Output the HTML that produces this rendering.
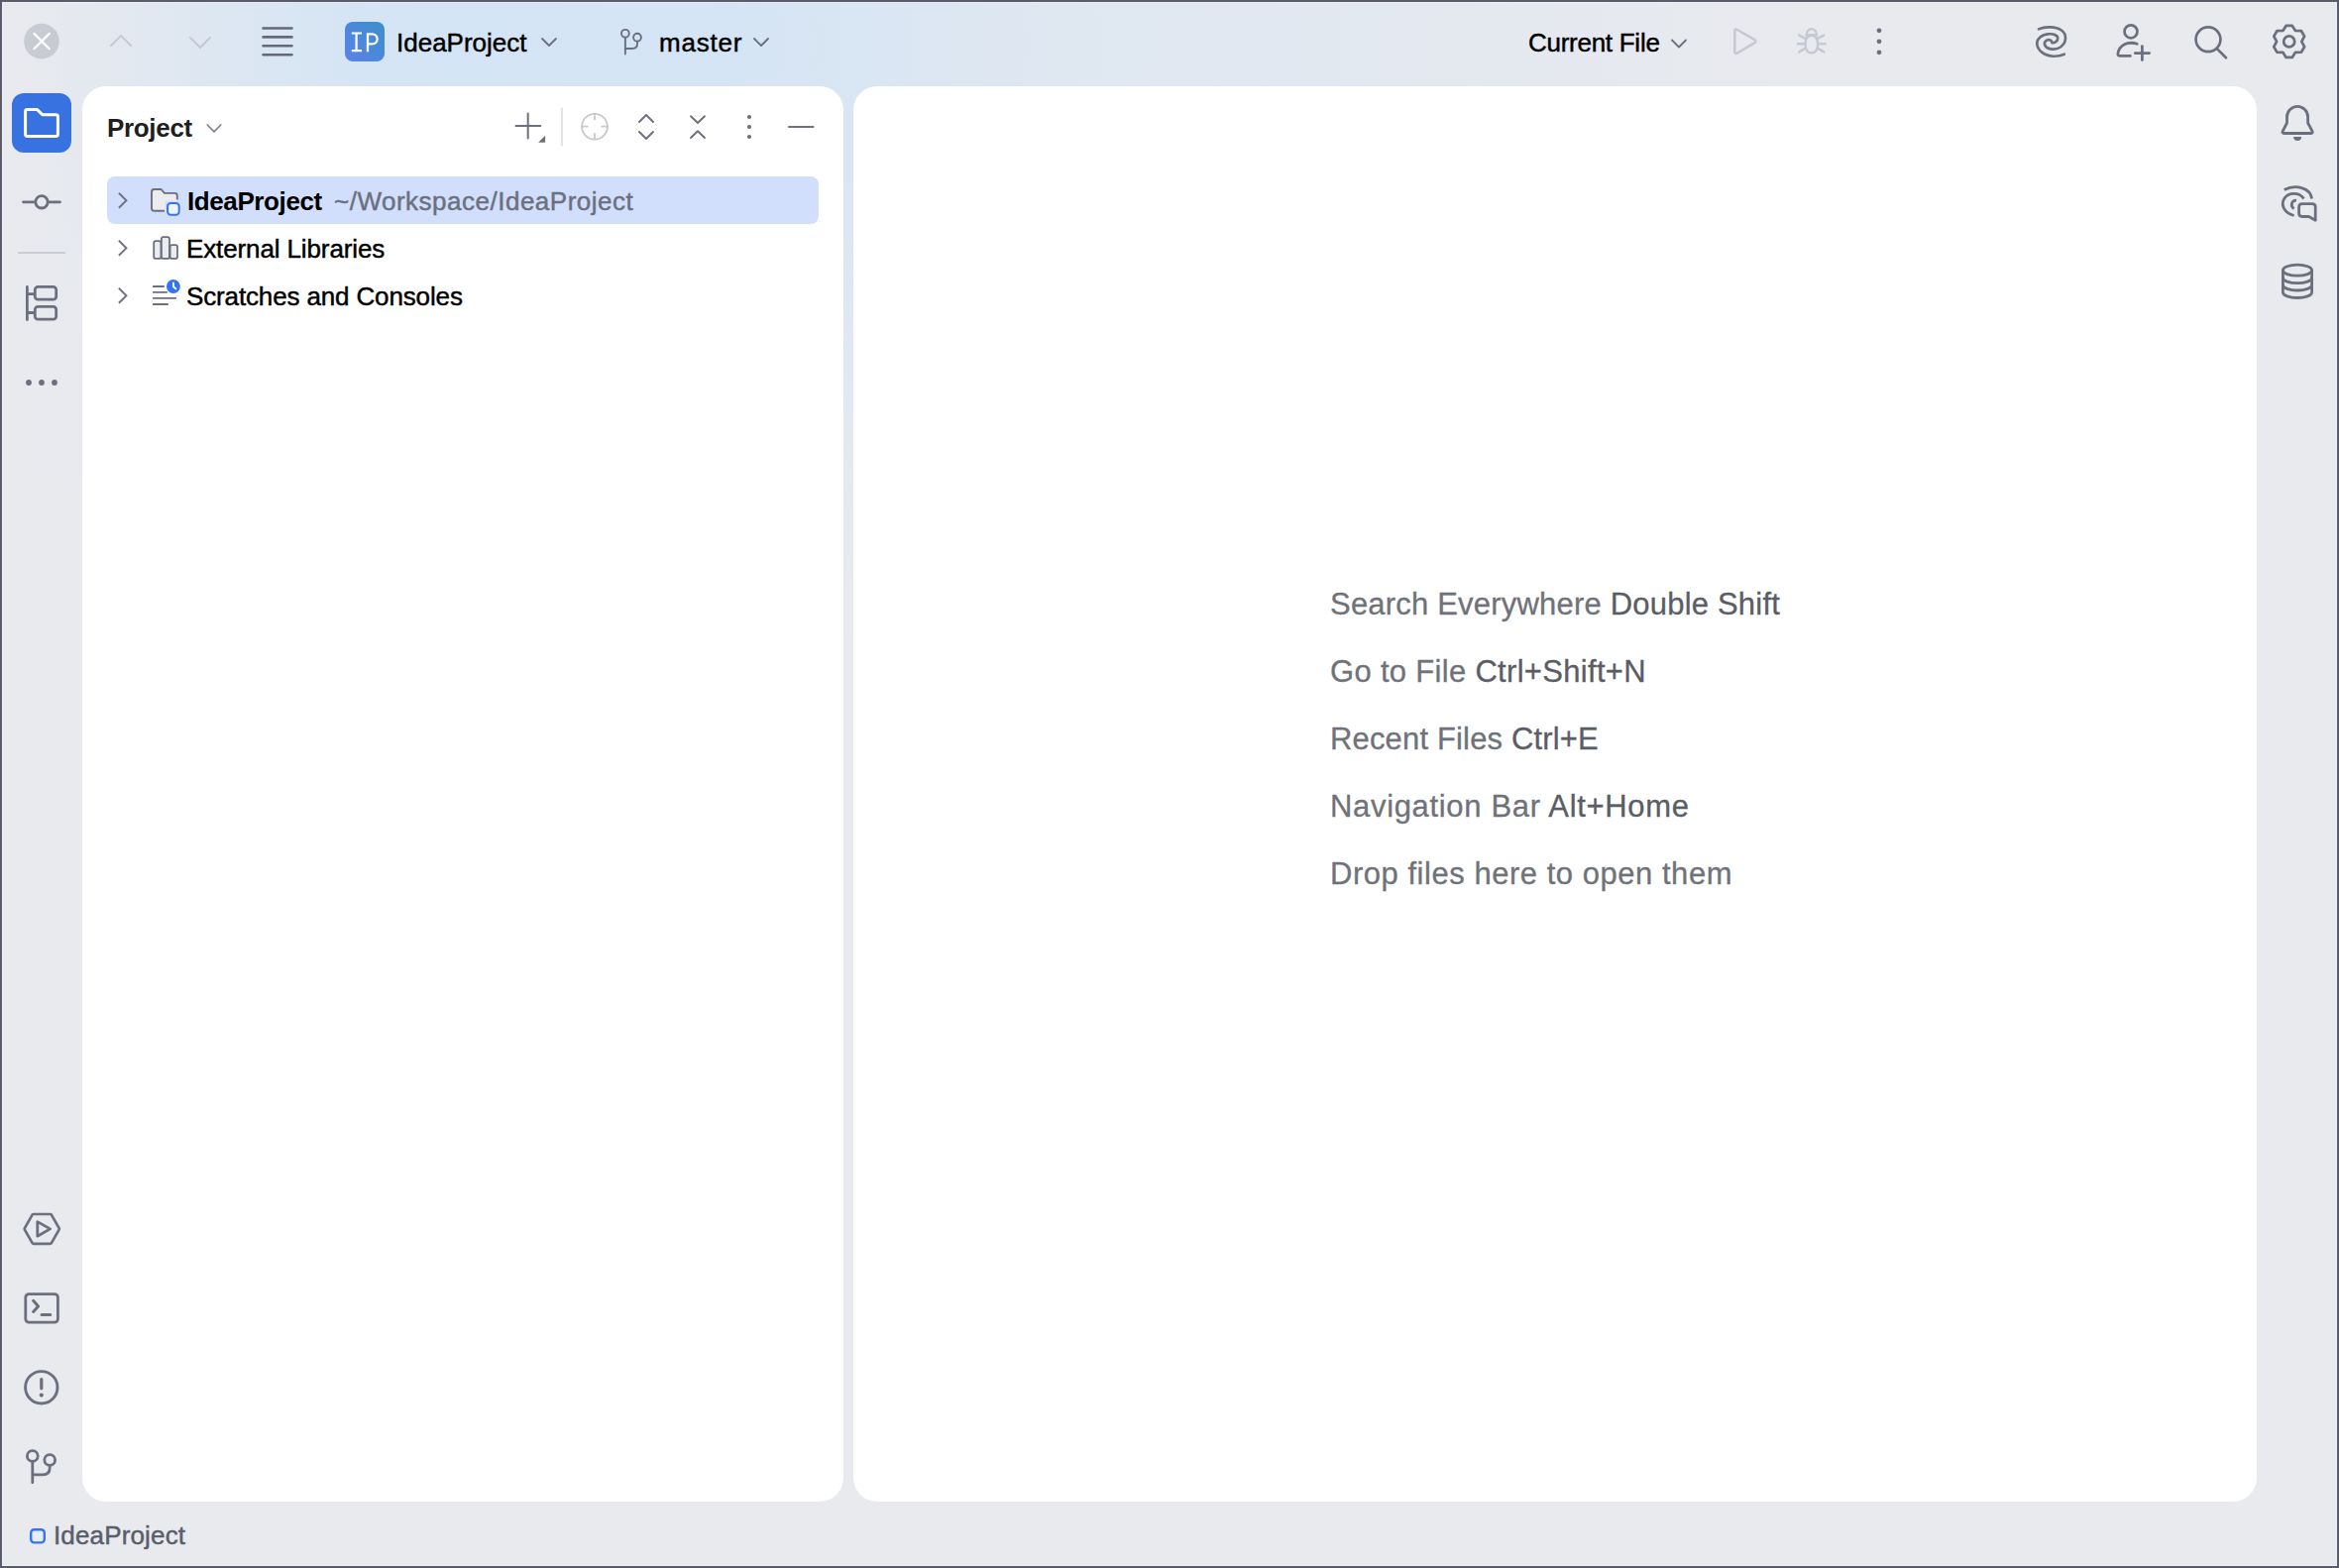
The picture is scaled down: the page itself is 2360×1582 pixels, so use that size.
<!DOCTYPE html>
<html>
<head>
<meta charset="utf-8">
<style>
html,body{margin:0;padding:0;}
body{width:2360px;height:1582px;position:relative;overflow:hidden;background:#5A5C69;font-family:"Liberation Sans",sans-serif;}
#win{position:absolute;left:2px;top:2px;width:2356px;height:1578px;background:#E9EAEE;overflow:hidden;}
#hl{position:absolute;left:2px;top:2px;width:2354px;height:1576px;border:1px solid rgba(246,248,255,0.45);pointer-events:none;}
#glow{position:absolute;left:0;top:0;width:2356px;height:1578px;background:
 radial-gradient(ellipse 560px 440px at 460px 40px, rgba(211,228,245,0.95) 0%, rgba(211,228,245,0.8) 45%, rgba(211,228,245,0) 100%),
 radial-gradient(ellipse 1100px 620px at 760px 40px, rgba(211,228,245,0.6) 0%, rgba(211,228,245,0.35) 50%, rgba(211,228,245,0) 100%);}
#lmask{position:absolute;left:0;top:0;width:420px;height:1578px;background:linear-gradient(to right, rgba(233,234,238,0.92) 0px, rgba(233,234,238,0.6) 110px, rgba(233,234,238,0) 380px);}
.panel{position:absolute;background:#fff;border-radius:24px;}
.t{position:absolute;white-space:pre;line-height:40px;height:40px;}
.r{-webkit-text-stroke:0.45px currentColor;}
svg.ov{position:absolute;left:0;top:0;}
</style>
</head>
<body>
<div id="win">
  <div id="glow"></div>
  <div id="lmask"></div>
</div>
<!-- panels in page coordinates -->
<div class="panel" style="left:83px;top:87px;width:768px;height:1428px;"></div>
<div class="panel" style="left:861px;top:87px;width:1416px;height:1428px;"></div>
<!-- selection -->
<div style="position:absolute;left:108px;top:178px;width:718px;height:48px;background:#D1DFFD;border-radius:8px;"></div>

<!-- Toolbar texts -->
<div class="t r" style="left:400px;top:23px;font-size:26px;color:#000;">IdeaProject</div>
<div class="t r" style="left:665px;top:23px;font-size:26px;color:#000;letter-spacing:0.8px;">master</div>
<div class="t r" style="left:1542px;top:23px;font-size:26px;color:#000;letter-spacing:-0.27px;">Current File</div>

<!-- Project panel header -->
<div class="t" style="left:108px;top:109px;font-size:26px;font-weight:bold;color:#1E1F22;letter-spacing:-0.33px;">Project</div>

<!-- Tree -->
<div class="t" style="left:189px;top:183px;font-size:26px;font-weight:bold;color:#000;letter-spacing:-0.4px;">IdeaProject</div>
<div class="t r" style="left:337px;top:183px;font-size:26px;color:#6C707E;letter-spacing:0.5px;">~/Workspace/IdeaProject</div>
<div class="t r" style="left:188px;top:231px;font-size:26px;color:#000;letter-spacing:-0.12px;">External Libraries</div>
<div class="t r" style="left:188px;top:279px;font-size:26px;color:#000;letter-spacing:-0.14px;">Scratches and Consoles</div>

<!-- Editor empty text -->
<div class="t r" style="left:1342px;top:590px;font-size:31px;color:#6F7279;-webkit-text-stroke-width:0.3px;letter-spacing:0.2px;">Search Everywhere <span style="color:#5A5D66">Double Shift</span></div>
<div class="t r" style="left:1342px;top:658px;font-size:31px;color:#6F7279;-webkit-text-stroke-width:0.3px;letter-spacing:0.31px;">Go to File <span style="color:#5A5D66">Ctrl+Shift+N</span></div>
<div class="t r" style="left:1342px;top:726px;font-size:31px;color:#6F7279;-webkit-text-stroke-width:0.3px;letter-spacing:0.16px;">Recent Files <span style="color:#5A5D66">Ctrl+E</span></div>
<div class="t r" style="left:1342px;top:794px;font-size:31px;color:#6F7279;-webkit-text-stroke-width:0.3px;letter-spacing:0.67px;">Navigation Bar <span style="color:#5A5D66">Alt+Home</span></div>
<div class="t r" style="left:1342px;top:862px;font-size:31px;color:#6F7279;-webkit-text-stroke-width:0.3px;letter-spacing:0.53px;">Drop files here to open them</div>

<!-- Status bar -->
<div class="t r" style="left:54px;top:1529px;font-size:26px;color:#5A5D6B;letter-spacing:0.15px;">IdeaProject</div>

<div id="hl"></div>
<svg class="ov" width="2360" height="1582" viewBox="0 0 2360 1582" fill="none" stroke-linecap="round" stroke-linejoin="round">
 <defs>
  <linearGradient id="ipg" x1="0" y1="1" x2="1" y2="0">
   <stop offset="0" stop-color="#5B82E8"/>
   <stop offset="1" stop-color="#3B8FCB"/>
  </linearGradient>
 </defs>
 <!-- close button -->
 <circle cx="42" cy="41.6" r="17.8" fill="#C9CBD3"/>
 <path d="M34.4,33.9 L49.8,49.3 M49.8,33.9 L34.4,49.3" stroke="#fff" stroke-width="2.2"/>
 <!-- back/forward disabled -->
 <path d="M112,46 L122,36 L132,46" stroke="#C6C9D1" stroke-width="1.8"/>
 <path d="M192,38 L202,48 L212,38" stroke="#C6C9D1" stroke-width="1.8"/>
 <!-- hamburger -->
 <path d="M265.5,28.5 H294.5 M265.5,37.4 H294.5 M265.5,46.3 H294.5 M265.5,55.3 H294.5" stroke="#656977" stroke-width="2.6"/>
 <!-- project icon -->
 <rect x="348" y="22" width="40" height="40" rx="8" fill="url(#ipg)"/>
 <path d="M354.8,33.5 H365 M359.6,33.5 V51.1 M354.8,51.1 H365" stroke="#fff" stroke-width="2.2" stroke-linecap="butt"/>
 <path d="M371,52.2 V34.3 H375.6 A5.05,5.05 0 0 1 375.6,44.4 H371" stroke="#fff" stroke-width="2.3" stroke-linecap="butt" stroke-linejoin="miter"/>
 <!-- chevrons -->
 <path d="M547,39 L554,46 L561,39" stroke="#6C707E" stroke-width="1.8"/>
 <!-- branch icon -->
 <circle cx="630.9" cy="33.8" r="3.9" stroke="#6C707E" stroke-width="1.9"/>
 <circle cx="643" cy="37.7" r="3.9" stroke="#6C707E" stroke-width="1.9"/>
 <path d="M630.9,37.7 V54.6 M643,41.6 V44 Q643,49 638,49 H630.9" stroke="#6C707E" stroke-width="1.9"/>
 <path d="M761,39 L768,46 L775,39" stroke="#6C707E" stroke-width="1.8"/>
 <!-- current file chevron -->
 <path d="M1687,40.5 L1694,47.5 L1701,40.5" stroke="#6C707E" stroke-width="1.8"/>
 <!-- run disabled -->
 <path d="M1750.3,31.5 Q1750.3,28.6 1752.8,30 L1770.5,40.2 Q1772.8,41.7 1770.5,43.2 L1752.8,53.6 Q1750.3,55 1750.3,52.2 Z" stroke="#C6C9D1" stroke-width="2.5"/>
 <!-- debug disabled -->
 <g stroke="#C6C9D1" stroke-width="2.4">
  <path d="M1827.8,35.8 C1832.3,35.8 1834.1,39.2 1834.1,44.6 C1834.1,50 1832.3,53.4 1827.8,53.4 C1823.3,53.4 1821.5,50 1821.5,44.6 C1821.5,39.2 1823.3,35.8 1827.8,35.8 Z"/>
  <path d="M1822.9,35.2 V34.2 A4.9,4.9 0 0 1 1832.7,34.2 V35.2"/>
  <path d="M1822.6,35.2 H1833"/>
  <path d="M1814,44.3 H1820.5 M1835.1,44.3 H1841.6 M1815.3,35.6 L1821.3,38.6 M1840.3,35.6 L1834.3,38.6 M1815.3,52.4 L1820.6,49.3 M1840.3,52.4 L1835,49.3"/>
 </g>
 <!-- kebab -->
 <circle cx="1896" cy="30.8" r="2.4" fill="#6C707E"/>
 <circle cx="1896" cy="41.8" r="2.4" fill="#6C707E"/>
 <circle cx="1896" cy="52.8" r="2.4" fill="#6C707E"/>
 <!-- AI spiral -->
 <path d="M2057,29.4 C2063,26.6 2074,26.3 2080,30.5 C2085.5,34.5 2085.5,43 2079,47.5 C2074,50.8 2066,50.2 2063.5,46 C2061.5,42.5 2065,39.7 2068,40.3 C2069.5,40.6 2070.5,41.8 2070.2,42.9 C2072.5,43.7 2076,42 2076.2,39 C2076.5,35.5 2072,34 2067.5,34.3 C2060,34.8 2055,39 2055.3,44 C2055.6,51 2063,56.5 2072,56.7 C2076,56.8 2080,56 2082.8,54.7" stroke="#6C707E" stroke-width="2.65"/>
 <!-- add user -->
 <circle cx="2150" cy="31.8" r="6.5" stroke="#6C707E" stroke-width="2.75"/>
 <path d="M2156.3,44.3 C2147,41.2 2138,45.5 2136.9,54.4 Q2136.7,56.4 2138.9,56.4 H2149.4" stroke="#6C707E" stroke-width="2.75"/>
 <path d="M2161.4,46.5 V60.5 M2154.2,53.5 H2168.6" stroke="#6C707E" stroke-width="2.75"/>
 <!-- search -->
 <circle cx="2228" cy="39.8" r="12.4" stroke="#6C707E" stroke-width="2.7"/>
 <path d="M2237.4,49.6 L2246,58.2" stroke="#6C707E" stroke-width="2.7"/>
 <!-- settings gear -->
 <path d="M2312.8,25.9 L2306.6,25.9 L2303.4,31.0 L2297.4,31.2 L2294.3,36.6 L2297.1,41.9 L2294.3,47.2 L2297.4,52.6 L2303.4,52.8 L2306.6,57.9 L2312.8,57.9 L2316.0,52.8 L2322.0,52.6 L2325.1,47.2 L2322.3,41.9 L2325.1,36.6 L2322.0,31.2 L2316.0,31.0Z" stroke="#6C707E" stroke-width="2.75"/>
 <circle cx="2309.7" cy="41.9" r="5.5" stroke="#6C707E" stroke-width="2.75"/>

 <!-- left stripe: project button -->
 <rect x="12" y="94" width="60" height="60" rx="12" fill="#3872E0"/>
 <path d="M25.6,112.5 Q25.6,110.6 27.5,110.6 H37.5 L43,115.8 H56.5 Q58.4,115.8 58.4,117.7 V135.5 Q58.4,137.4 56.5,137.4 H27.5 Q25.6,137.4 25.6,135.5 Z" stroke="#fff" stroke-width="3"/>
 <!-- commit -->
 <path d="M23.5,203.8 H34.3 M49.7,203.8 H60.5" stroke="#6C707E" stroke-width="2.8"/>
 <circle cx="42" cy="203.8" r="6.2" stroke="#6C707E" stroke-width="2.8"/>
 <!-- separator -->
 <path d="M18,255 H66" stroke="#C9CCD4" stroke-width="2" stroke-linecap="butt"/>
 <!-- structure -->
 <path d="M27.4,289.5 V322.5 M27.4,296.7 H34.5 M27.4,315.5 H34.5" stroke="#6C707E" stroke-width="2.8"/>
 <rect x="35.3" y="289.3" width="21.4" height="12.9" rx="3" stroke="#6C707E" stroke-width="2.8"/>
 <rect x="35.3" y="309.3" width="21.4" height="12.9" rx="3" stroke="#6C707E" stroke-width="2.8"/>
 <!-- more -->
 <circle cx="29" cy="386" r="2.9" fill="#6C707E"/>
 <circle cx="42" cy="386" r="2.9" fill="#6C707E"/>
 <circle cx="55" cy="386" r="2.9" fill="#6C707E"/>
 <!-- bottom left: services -->
 <path d="M33.8,1225 H50.7 Q51.5,1225 51.9,1225.7 L59.6,1239.2 Q60,1239.9 59.6,1240.6 L51.9,1254.2 Q51.5,1254.9 50.7,1254.9 H33.8 Q33,1254.9 32.6,1254.2 L24.9,1240.6 Q24.5,1239.9 24.9,1239.2 L32.6,1225.7 Q33,1225 33.8,1225 Z" stroke="#6C707E" stroke-width="2.7"/>
 <path d="M37.8,1232.6 V1247.2 L50.6,1239.9 Z" stroke="#6C707E" stroke-width="2.8"/>
 <!-- terminal -->
 <rect x="25.8" y="1305.6" width="32.6" height="28.6" rx="3.4" stroke="#6C707E" stroke-width="2.8"/>
 <path d="M33.6,1312.3 L38.6,1317.9 L33.6,1323.5 M42,1326.4 H50.8" stroke="#6C707E" stroke-width="3"/>
 <!-- problems -->
 <circle cx="41.8" cy="1399.8" r="16.2" stroke="#6C707E" stroke-width="2.9"/>
 <path d="M41.8,1391.6 V1400.8" stroke="#6C707E" stroke-width="3.2"/>
 <circle cx="41.8" cy="1407.6" r="2.1" fill="#6C707E"/>
 <!-- git -->
 <circle cx="32.8" cy="1469" r="5.4" stroke="#6C707E" stroke-width="2.8"/>
 <circle cx="50.2" cy="1473" r="5.4" stroke="#6C707E" stroke-width="2.8"/>
 <path d="M32.8,1474.4 V1495.8 M50.2,1478.4 V1481 Q50.2,1487.8 43.4,1487.8 H32.8" stroke="#6C707E" stroke-width="2.8"/>

 <!-- right stripe: bell -->
 <path d="M2307.5,124 V118 A10.55,10.55 0 0 1 2328.6,118 V124 L2332.9,132.2 Q2334.1,134.5 2331.6,134.5 H2304.6 Q2302.1,134.5 2303.3,132.2 Z" stroke="#6C707E" stroke-width="2.8"/>
 <path d="M2314.1,138.1 A4,4 0 0 0 2322.1,138.1 Z" fill="#6C707E"/>
 <!-- ai chat -->
 <g stroke="#6C707E" stroke-width="2.8">
  <path d="M2304.7,191.4 C2316,186 2331,189 2332.6,200.5" stroke-linecap="butt"/>
  <path d="M2324.5,200.5 C2320,193.5 2309,194 2305,200 C2300.5,207 2305,215 2314.6,217.5" stroke-linecap="butt"/>
  <path d="M2317,202.2 C2312.5,202 2310.2,207.5 2314.6,210.5" stroke-linecap="butt"/>
  <path d="M2322.8,205.6 H2333 Q2336.2,205.6 2336.2,208.8 V222.3 L2329.6,218.5 H2322.8 Q2319.6,218.5 2319.6,215.3 V208.8 Q2319.6,205.6 2322.8,205.6 Z"/>
 </g>
 <!-- database -->
 <g stroke="#6C707E" stroke-width="2.8">
  <ellipse cx="2318" cy="272.7" rx="14.6" ry="5.5"/>
  <path d="M2303.4,272.7 V295 A14.6,5.5 0 0 0 2332.6,295 V272.7"/>
  <path d="M2303.4,280.2 A14.6,5.5 0 0 0 2332.6,280.2 M2303.4,287.5 A14.6,5.5 0 0 0 2332.6,287.5"/>
 </g>

 <!-- project panel header icons -->
 <path d="M220,128" />
 <path d="M209.2,126 L216,132.8 L222.8,126" stroke="#7E818B" stroke-width="1.7"/>
 <path d="M520.5,126.9 H545.3 M532.7,114.5 V139.5" stroke="#6C707E" stroke-width="2"/>
 <path d="M550.1,136.7 V143.7 H543.1 Z" fill="#6C707E"/>
 <path d="M567,108.5 V147.5" stroke="#DCDEE3" stroke-width="1.6" stroke-linecap="butt"/>
 <circle cx="600" cy="127.7" r="12.9" stroke="#C8C9CE" stroke-width="1.8"/>
 <path d="M600,114.8 V120.5 M600,135 V140.6 M587.1,127.7 H592.8 M607.2,127.7 H612.9" stroke="#C8C9CE" stroke-width="1.8"/>
 <path d="M645,123 L652,116 L659,123 M645,133 L652,140 L659,133" stroke="#6C707E" stroke-width="1.9"/>
 <path d="M697,117.3 L704,124 L711,117.3 M697,139 L704,132.3 L711,139" stroke="#6C707E" stroke-width="1.9"/>
 <circle cx="756" cy="118" r="2.1" fill="#6C707E"/>
 <circle cx="756" cy="128" r="2.1" fill="#6C707E"/>
 <circle cx="756" cy="138" r="2.1" fill="#6C707E"/>
 <path d="M796,128 H820.5" stroke="#6C707E" stroke-width="2"/>

 <!-- tree chevrons -->
 <path d="M119.9,194.7 L127.5,202.2 L119.9,209.7 M119.9,242.7 L127.5,250.2 L119.9,257.7 M119.9,290.7 L127.5,298.2 L119.9,305.7" stroke="#6F7380" stroke-width="1.9" stroke-linecap="butt" stroke-linejoin="miter"/>
 <!-- folder icon row 1 -->
 <path d="M153,193.5 Q153,191 155.5,191 H162.6 L165.9,194.9 H176.3 Q178.8,194.9 178.8,197.4 V212.7 H155.5 Q153,212.7 153,210.2 Z" fill="#EBECF0"/>
 <path d="M166,212.7 H155.5 Q153,212.7 153,210.2 V193.5 Q153,191 155.5,191 H162.6 L165.9,194.9 H176.3 Q178.8,194.9 178.8,197.4 V201.4" stroke="#6C707E" stroke-width="1.9" stroke-linecap="butt"/>
 <rect x="166.5" y="202.5" width="17" height="17" fill="#D1DFFD"/>
 <rect x="169.1" y="205" width="11.6" height="11.7" rx="3.2" fill="#EEF4FF" stroke="#3574F0" stroke-width="2"/>
 <!-- external libraries -->
 <g fill="#EBECF0" stroke="#6C707E" stroke-width="1.8">
  <rect x="155.2" y="243.1" width="7.2" height="17.8" rx="2"/>
  <rect x="162.9" y="239.1" width="8.1" height="21.8" rx="2"/>
  <rect x="171.6" y="247.1" width="7.4" height="13.8" rx="2"/>
 </g>
 <!-- scratches -->
 <path d="M154.1,289 H165.8 M154.1,294.9 H168.8 M154.1,300.9 H177.9 M154.1,307 H169.8" stroke="#6C707E" stroke-width="1.9" stroke-linecap="butt"/>
 <circle cx="174.9" cy="289" r="6.9" fill="#3574F0"/>
 <path d="M175,284.8 V289.3 L178,291.9" stroke="#fff" stroke-width="1.9" stroke-linecap="butt"/>

 <!-- status bar project square -->
 <rect x="31.2" y="1543.2" width="13.6" height="13.2" rx="3.4" fill="#E6ECF8" stroke="#3574F0" stroke-width="2.4"/>
</svg>
</body>
</html>
